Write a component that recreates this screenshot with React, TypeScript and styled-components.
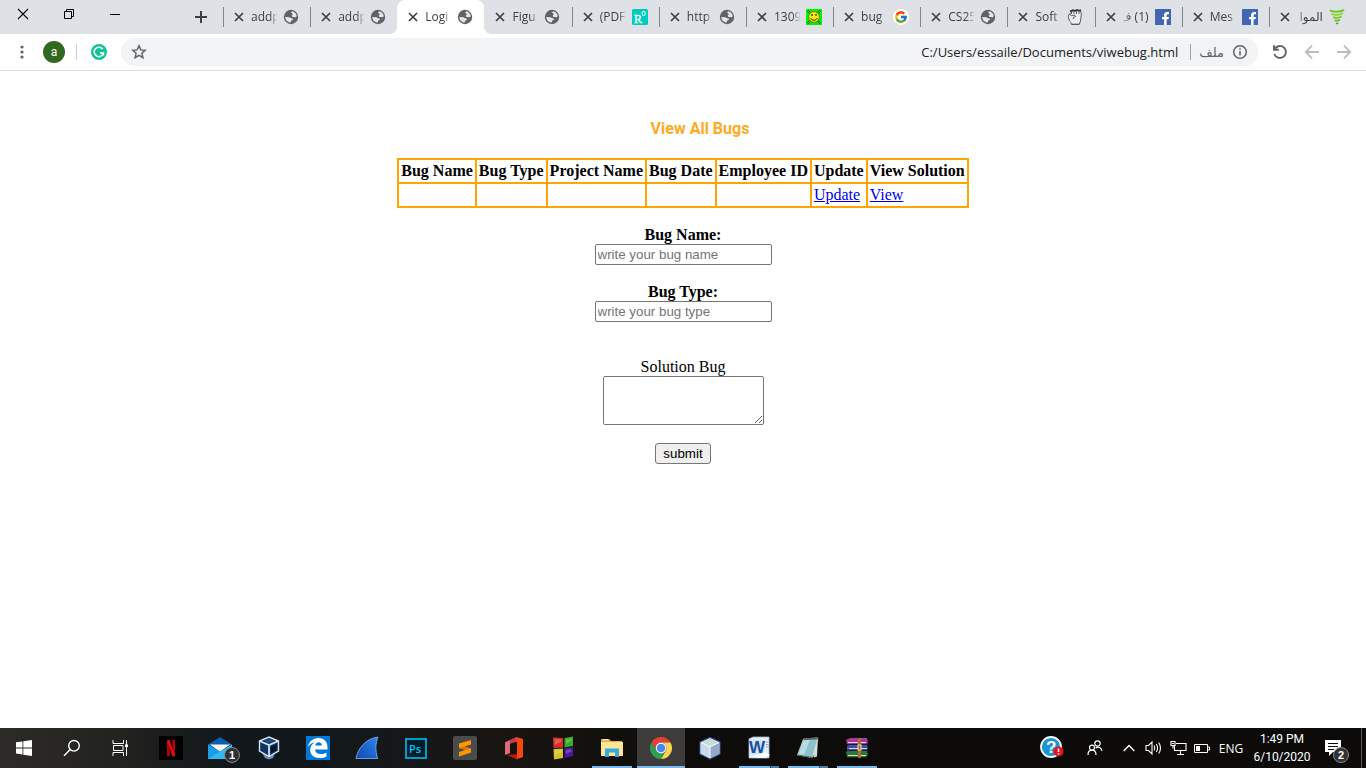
import React from "react";
import styled, { createGlobalStyle, css } from "styled-components";
import { FcGoogle } from "react-icons/fc";
import { FaFacebookF } from "react-icons/fa";

const GlobalStyle = createGlobalStyle`
  * { box-sizing: border-box; }
  body {
    margin: 0;
    background: #fff;
    color: #000;
    font-family: "Liberation Serif", "Times New Roman", serif;
    font-size: 16px;
    line-height: 18px;
  }
  svg { display: block; flex: none; }
`;

const uiFont = `"Open Sans", "Noto Sans", "DejaVu Sans", sans-serif`;

const Screen = styled.div`
  display: flex;
  flex-direction: column;
  min-height: 100vh;
`;

/* ---------- Browser frame ---------- */

const TabStrip = styled.header`
  display: flex;
  height: 34px;
  padding-right: 10px;
  background: #dee1e6;
  font-family: ${uiFont};
`;

const WindowControls = styled.div`
  display: flex;
  height: 28px;
  margin-right: 49px;
`;

const PlainButton = styled.button`
  display: flex;
  align-items: center;
  justify-content: center;
  flex: none;
  padding: 0;
  border: 0;
  background: none;
  color: inherit;
`;

const WindowButton = styled(PlainButton)`
  width: 46px;
  height: 28px;
`;

const NewTabButton = styled(PlainButton)`
  width: 28px;
  height: 34px;
  margin-right: 8px;
`;

const TabList = styled.div`
  display: flex;
  flex: 1;
  min-width: 0;
`;

const Tab = styled.div<{ $active?: boolean; $divider?: boolean }>`
  position: relative;
  display: flex;
  flex: 1 1 0;
  align-items: center;
  min-width: 0;
  padding-left: 11px;
  ${(p) =>
    p.$divider &&
    css`
      background: linear-gradient(#80868b, #80868b) 0 7px / 1px 20px no-repeat;
    `}
  ${(p) =>
    p.$active &&
    css`
      background: #fff;
      border-radius: 8px 8px 0 0;
      &::before,
      &::after {
        content: "";
        position: absolute;
        bottom: 0;
        width: 8px;
        height: 8px;
      }
      &::before {
        left: -8px;
        background: radial-gradient(circle at 0 0, transparent 8px, #fff 8px);
      }
      &::after {
        right: -8px;
        background: radial-gradient(circle at 100% 0, transparent 8px, #fff 8px);
      }
    `}
`;

const TabTitle = styled.span<{ $rtl?: boolean }>`
  flex: none;
  width: 26px;
  margin: 0 6px 0 7px;
  overflow: hidden;
  direction: ${(p) => (p.$rtl ? "rtl" : "ltr")};
  color: #3c4043;
  font-size: 12px;
  line-height: 18px;
  white-space: nowrap;
  mask-image: linear-gradient(
    ${(p) => (p.$rtl ? "to left" : "to right")},
    #000 70%,
    rgba(0, 0, 0, 0.1)
  );
`;

const Toolbar = styled.div`
  display: flex;
  align-items: center;
  height: 37px;
  padding: 0 14px;
  border-bottom: 1px solid #dadce0;
  background: #fff;
  font-family: ${uiFont};
`;

const MenuButton = styled(PlainButton)`
  width: 16px;
  height: 24px;
  margin-right: 13px;
`;

const Avatar = styled(PlainButton)`
  width: 22px;
  height: 22px;
  border-radius: 50%;
  background: #33691e;
  color: #fff;
  font: 12px Roboto, sans-serif;
`;

const Divider = styled.span<{ $tone: string; $gap?: number }>`
  flex: none;
  width: 1px;
  height: 16px;
  margin-left: ${(p) => p.$gap ?? 0}px;
  background: ${(p) => p.$tone};
`;

const ExtensionButton = styled(PlainButton)`
  margin: 0 14px;
`;

const AddressBar = styled.div`
  display: flex;
  flex: 1;
  align-items: center;
  min-width: 0;
  height: 28px;
  margin-right: 14px;
  padding: 0 10px;
  border-radius: 14px;
  background: #f1f3f4;
`;

const AddressInput = styled.input`
  flex: 1;
  min-width: 0;
  padding: 0 12px;
  border: 0;
  outline: 0;
  background: none;
  color: #202124;
  font: 13px ${uiFont};
  text-align: right;
`;

const SchemeLabel = styled.span`
  margin: 0 8px;
  color: #5f6368;
  font-size: 13px;
`;

const NavButtons = styled.div`
  display: flex;
  gap: 16px;
`;

const NavButton = styled(PlainButton)`
  width: 16px;
  height: 16px;
`;

/* ---------- Page content ---------- */

const Page = styled.main`
  display: flex;
  flex: 1;
  flex-direction: column;
  align-items: center;
  padding: 48px 8px 8px;
`;

const Heading = styled.h1`
  margin: 0 0 19px;
  padding-left: 34px;
  color: #ffa922;
  font: bold 16px/20px Roboto, Arial, sans-serif;
`;

const BugTable = styled.table`
  border-collapse: collapse;
  margin-bottom: 18px;
`;

const cell = css`
  height: 24px;
  padding: 2px;
  border: 2px solid orange;
  white-space: nowrap;
`;

const HeadCell = styled.th`
  ${cell}
`;

const Cell = styled.td`
  ${cell}
`;

const CellLink = styled.a`
  color: #0000ee;
`;

const BugForm = styled.form`
  display: flex;
  flex-direction: column;
  align-items: center;
  gap: 18px;
`;

const Field = styled.div`
  display: flex;
  flex-direction: column;
  align-items: center;
`;

const SolutionField = styled(Field)`
  padding-top: 18px;
`;

const FieldLabel = styled.label<{ $bold?: boolean }>`
  font-weight: ${(p) => (p.$bold ? "bold" : "normal")};
`;

const TextBox = styled.input`
  width: 177px;
  height: 21px;
  padding: 1px 2px;
  border: 1px solid #767676;
  border-radius: 2px;
  font-family: "Liberation Sans", Arial, sans-serif;
  &::placeholder { color: #757575; }
`;

const SolutionBox = styled.textarea`
  width: 161px;
  height: 49px;
  border: 1px solid #767676;
  border-radius: 2px;
`;

const SubmitButton = styled.button`
  width: 56px;
  height: 21px;
  padding: 0;
  border: 1px solid #767676;
  border-radius: 3px;
  background: #efefef;
  color: #000;
  font-family: "Liberation Sans", Arial, sans-serif;
`;

/* ---------- Taskbar ---------- */

const Taskbar = styled.footer`
  display: flex;
  height: 40px;
  background: linear-gradient(90deg, #2d2b28 0, #22221f 9%, #11171b 17%, #14181b 27%, #181512 36%, #0e0c0a 50%, #0c0b0a 100%);
  color: #fff;
  font-family: ${uiFont};
  font-size: 12px;
`;

const SystemButtons = styled.div`
  display: flex;
  margin-right: 3px;
`;

const AppButtons = styled.div`
  display: flex;
  flex: 1;
  gap: 1px;
`;

const TaskButton = styled(PlainButton)<{ $state?: "open" | "active" | "multi" }>`
  position: relative;
  width: 48px;
  height: 40px;
  ${(p) =>
    p.$state === "open" &&
    css`
      background: linear-gradient(#76b9ed, #76b9ed) 50% 100% / 40px 2px no-repeat;
    `}
  ${(p) =>
    p.$state === "active" &&
    css`
      background: linear-gradient(#76b9ed, #76b9ed) 0 100% / 48px 2px no-repeat #3d3c3b;
    `}
  ${(p) =>
    p.$state === "multi" &&
    css`
      background: linear-gradient(90deg, #76b9ed 31px, #2b4459 31px, #2b4459 32px, #4e7ba0 32px) 50% 100% / 40px 2px no-repeat;
    `}
`;

const Badge = styled.span<{ $left: number }>`
  position: absolute;
  left: ${(p) => p.$left}px;
  top: 19px;
  width: 16px;
  height: 16px;
  border: 1px solid #8b8b8b;
  border-radius: 50%;
  background: #2f3133;
  font-size: 11px;
  font-weight: 600;
  line-height: 14px;
  text-align: center;
`;

const Tray = styled.div`
  display: flex;
  align-items: center;
`;

const TrayButton = styled(PlainButton)<{ $w: number }>`
  width: ${(p) => p.$w}px;
  height: 40px;
  font: 12px ${uiFont};
`;

const Clock = styled(PlainButton)`
  flex-direction: column;
  width: 68px;
  height: 40px;
  font: 12px/18px "Noto Sans", ${uiFont};
  font-family: Roboto, sans-serif;
`;

const Notifications = styled(PlainButton)`
  position: relative;
  width: 45px;
  height: 40px;
  padding-right: 12px;
`;

const ShowDesktop = styled(PlainButton)`
  width: 5px;
  height: 40px;
  border-left: 1px solid #5a5957;
`;

/* ---------- Icons ---------- */

const CloseIcon = () => (
  <svg width="10" height="10" viewBox="0 0 10 10" fill="none" stroke="#3c4043" strokeWidth="1.7">
    <path d="M1 1l8 8M9 1l-8 8" />
  </svg>
);

const Globe = () => (
  <svg width="16" height="16" viewBox="0 0 16 16">
    <circle cx="8" cy="8" r="7.2" fill="#5f6368" />
    <path
      d="M9 2.300c2.500.4 4.500 2.400 4.700 4.700-.5 1.500-1.700 1.600-2.400 1l-1.900-.1-.7-1.500L10 5.300l-.7-.9-1.200-.3zM2.300 8l4.200.2 1.500 1 1.700.2.300 1.300-1.900 1-.4 1.900C4.800 13.400 2.400 11.300 2.300 8z"
      fill="#e4e6ea"
    />
  </svg>
);

const ResearchGate = () => (
  <svg width="16" height="16" viewBox="0 0 16 16">
    <rect width="16" height="16" rx="1.5" fill="#00ccbb" />
    <text x="2" y="14" fontFamily="Liberation Serif, serif" fontSize="12" fill="#fff" stroke="#fff" strokeWidth=".3">R</text>
    <rect x="10.200" y="2.500" width="3" height="4" rx="1.200" fill="none" stroke="#fff" />
  </svg>
);

const Smiley = () => (
  <svg width="16" height="16" viewBox="0 0 16 16">
    <rect width="16" height="16" fill="#00f600" />
    <path d="M1 2l3 3M2 1l3 3M15 2l-3 3M14 1l-3 3M1 14l3-3M2 15l3-3M15 14l-3-3M14 15l-3-3" stroke="#386018" />
    <circle cx="8" cy="8" r="5.400" fill="#ffed16" stroke="#6b6400" strokeWidth=".8" />
    <path d="M6 5v2M10 5v2" stroke="#332e00" strokeWidth="1.300" />
    <path d="M4.700 9c1 3 5.600 3 6.600 0" fill="none" stroke="#332e00" />
  </svg>
);

const GoogleIcon = () => (
  <svg width="16" height="16" viewBox="0 0 16 16">
    <circle cx="8" cy="8" r="8" fill="#fff" />
    <FcGoogle x="1" y="1" width="14" height="14" size={14} />
  </svg>
);

const Fist = () => (
  <svg width="16" height="16" viewBox="0 0 16 16" fill="none" stroke="#4a4d50" strokeWidth=".9">
    <path d="M4.500 15.300c-.3-1.300-.8-2.300-2-3.300L1.300 7.500l1-2.500 2-.5L5 2l8.500-.3.8 3.500L13.500 12l-1.200 3.300z" fill="#eceef0" />
    <path d="M2.500 5.500l2 1.200 3-.7 1.300 1.500-2.300.7-.5 2" />
    <path d="M4.500 5V2.500M7 5V2M9.500 5V2M12 5V2M4.500 15.300h7.800" />
    <path d="M3 2.500l3-1.500 2 .8L10 .8l2 .8 2-.6" strokeWidth="1.500" stroke="#2c2e30" />
  </svg>
);

const Facebook = () => (
  <svg width="16" height="16" viewBox="0 0 16 16">
    <rect width="16" height="16" rx=".5" fill="#4267b2" />
    <FaFacebookF x="4" y="3" width="12" height="13" size={13} color="#fff" />
  </svg>
);

const Twister = () => (
  <svg width="16" height="16" viewBox="0 0 16 16" fill="none" strokeLinecap="round">
    <path d="M1.700 1.700Q8 4 14.300 1.300" stroke="#76c82c" strokeWidth="2.200" />
    <path d="M3 5.100Q8 7 13.200 4.600" stroke="#8fdb35" strokeWidth="2" />
    <path d="M4.800 8.300Q8 9.500 12 7.800" stroke="#7ccc2c" strokeWidth="1.800" />
    <path d="M6.300 11.400Q8.300 12 10.500 11" stroke="#68b822" strokeWidth="1.600" />
    <path d="M7.600 14.500l1.200-.3" stroke="#57a81b" strokeWidth="1.500" />
  </svg>
);

const Grammarly = () => (
  <svg width="16" height="16" viewBox="0 0 16 16">
    <circle cx="8" cy="8" r="8" fill="#15c39a" />
    <path d="M11.700 5.100A4.700 4.700 0 1 0 12.500 9H9M12.400 8.500v3" fill="none" stroke="#fff" strokeWidth="1.500" />
  </svg>
);

const StartIcon = () => (
  <svg width="16" height="16" viewBox="0 0 16 16" fill="#fff">
    <path d="M0 2.300l6.500-.9v6.100H0zM7.300 1.300L16 0v7.500H7.300zM0 8.400h6.500v6.100L0 13.600zM7.300 8.400H16V16l-8.700-1.300z" />
  </svg>
);

const SearchIcon = () => (
  <svg width="18" height="18" viewBox="0 0 18 18" fill="none" stroke="#fff" strokeWidth="1.400">
    <circle cx="11" cy="6.800" r="5.300" />
    <path d="M7.200 10.600L1 16.800" />
  </svg>
);

const TaskViewIcon = () => (
  <svg width="17" height="16" viewBox="0 0 17 16" fill="none" stroke="#fff">
    <path d="M1 0v3.500h10.500V0M1 16v-3.500h10.500V16M1.500 5.500h9.500v5H1.500zM14.500 0v16" />
    <path d="M13 4.500h3v2.500h-3z" fill="#fff" stroke="none" />
  </svg>
);

const Netflix = () => (
  <svg width="24" height="24" viewBox="0 0 24 24">
    <rect width="24" height="24" fill="#000" />
    <path d="M8 4h2.700v16L8 20.400zM13.300 4H16v16.400l-2.700-.4z" fill="#b1060f" />
    <path d="M8 4h2.700L16 20.400l-2.800-.4z" fill="#e50914" />
  </svg>
);

const Mail = () => (
  <svg width="24" height="24" viewBox="0 0 24 24">
    <path d="M0 8.500L12 1l12 7.500V11H0z" fill="#0f5fb0" />
    <path d="M2 8.500h20L12 16z" fill="#f4f6f8" />
    <path d="M0 8.500L12 15.500V23H0z" fill="#1b9de2" />
    <path d="M24 8.500V23H0l12-7.500z" fill="#35b8f1" />
  </svg>
);

const VirtualBox = () => (
  <svg width="22" height="24" viewBox="0 0 22 24">
    <path d="M4 17l7-2 6 2-2 5-4 1.500L7 22z" fill="#6d8eb5" />
    <path d="M1.500 5L11 1l9.500 4v10L11 20.500 1.500 15z" fill="#10345e" stroke="#d5e2f0" strokeWidth="1.400" />
    <path d="M1.500 5L11 9l9.500-4M11 9v11.500" fill="none" stroke="#d5e2f0" strokeWidth="1.800" />
    <path d="M6 5l5-2 5 2-5 2z" fill="#1c4f86" />
    <path d="M13 11l5.500-2.500v5.500L13 17z" fill="#02142c" />
  </svg>
);

const Edge = () => (
  <svg width="24" height="24" viewBox="0 0 24 24">
    <rect width="24" height="24" fill="#0078d7" />
    <path
      d="M2 11C3 5.500 7 2 12.300 2c6 0 9.200 4.200 9.200 9v2.500H9c.2 3 2.600 4.500 5.800 4.500 2.200 0 4-.5 5.700-1.500v4c-1.900 1-4.200 1.500-6.800 1.500C7.500 22 4.200 18.700 4.200 14c0-3.500 1.800-6.300 5-7.700C6 6.800 3.600 8.400 2 11zm7.200-1.500h6.600c0-2-1-3.300-3.100-3.300-1.900 0-3.200 1.300-3.500 3.300z"
      fill="#fff"
    />
  </svg>
);

const Wireshark = () => (
  <svg width="24" height="24" viewBox="0 0 24 24">
    <defs>
      <linearGradient id="fin" x1="0" y1="1" x2="1" y2="0">
        <stop offset="0" stopColor="#0d49b0" />
        <stop offset="1" stopColor="#2f86ee" />
      </linearGradient>
    </defs>
    <path d="M1 22.500C3 12 11 2.500 23 1c-2.500 6-3 13-.3 21.500z" fill="url(#fin)" stroke="#82b7f2" strokeWidth=".8" />
  </svg>
);

const Photoshop = () => (
  <svg width="22" height="21" viewBox="0 0 22 21">
    <rect x="1" y="1" width="20" height="19" fill="#001d26" stroke="#00c8ff" strokeWidth="1.500" />
    <text x="4" y="15" fontFamily="Open Sans, sans-serif" fontWeight="600" fontSize="11" fill="#00c8ff">Ps</text>
  </svg>
);

const Sublime = () => (
  <svg width="24" height="24" viewBox="0 0 24 24">
    <rect width="24" height="24" rx="2" fill="#4b4b4b" />
    <path d="M6 7.500L18 4v4.500l-6.500 2L18 12.500v4L6 20.500V16l6.500-2L6 12z" fill="#ff9800" />
    <path d="M6 12l6.500 2 5.500-1.500-6.500-2z" fill="#d97400" />
  </svg>
);

const Office = () => (
  <svg width="20" height="24" viewBox="0 0 20 24">
    <path d="M1 6.500L12 1v5L6 8v9l-5 2z" fill="#c33a54" />
    <path d="M1 6.500L6 4v13l-5 2z" fill="#f08d91" opacity=".6" />
    <path d="M12 1l7 2v18l-7 2.500z" fill="#f3490f" />
    <path d="M3 19l10-1v5.500z" fill="#c3180a" />
    <path d="M6 8l7-2v12.500l-7-1z" fill="#17110f" />
  </svg>
);

const ColorPanes = () => (
  <svg width="22" height="24" viewBox="0 0 22 24">
    <path d="M1 1.500l10 .5v9.500l-9.500.5z" fill="#d82f24" />
    <path d="M12.500 2L21 .5V10l-8.500 1.500z" fill="#39ad22" />
    <path d="M1.500 13l9.500-.5v9.500l-9 1.500z" fill="#d3c428" />
    <path d="M12.500 12.500l8.500-1.300V20l-8.500 2z" fill="#4c17a5" />
    <path d="M2.500 3l7 .4v2L2.700 9zM14 3.500l5.500-1v2L14 8zM3 14.500l6.500-.4v2L3 19zM14 14l5.500-.8v2L14 18z" fill="#fff" opacity=".22" />
  </svg>
);

const Explorer = () => (
  <svg width="24" height="22" viewBox="0 0 24 22">
    <path d="M1 3.500V2h8l2 2h11v15H1z" fill="#e8b03c" />
    <path d="M1 5h22v14H1z" fill="#ffe596" />
    <path d="M3 2.800h5" stroke="#fff" />
    <path d="M5 11.500h14V20h-4v-4.500H9V20H5z" fill="#35a9e0" />
  </svg>
);

const Chrome = () => (
  <svg width="24" height="24" viewBox="0 0 24 24">
    {[["#e44134", 0], ["#fdd44b", 120], ["#27a353", 240]].map(([fill, turn]) => (
      <path
        key={turn}
        d="M2.470 6.500A11 11 0 0 1 21.530 6.500L12 6.500A5.500 5.500 0 0 0 7.240 14.750z"
        fill={String(fill)}
        transform={`rotate(${turn} 12 12)`}
      />
    ))}
    <circle cx="12" cy="12" r="5.400" fill="#fff" />
    <circle cx="12" cy="12" r="4.300" fill="#4a86ee" />
  </svg>
);

const NetBeans = () => (
  <svg width="24" height="24" viewBox="0 0 24 24">
    <path d="M2 6l10-4.500L22 6v12l-10 5L2 18z" fill="#dde7f4" stroke="#35478a" strokeWidth="1.200" />
    <path d="M2.600 6.500L12 11v11.300l-9.400-4.700z" fill="#cdd9ea" />
    <path d="M12 11l9.400-4.500v11.100L12 22.300z" fill="#94a8cc" />
    <path d="M3 6.200l9-4 9 4-9 4.300z" fill="#c5dcd6" />
    <path d="M12 11v11M3 6.500l9 4.300 9-4.300" stroke="#f6faff" fill="none" />
  </svg>
);

const Word = () => (
  <svg width="24" height="24" viewBox="0 0 24 24">
    <path d="M2 3l4-2h16v21H2z" fill="#e7f0fa" stroke="#9db8d9" strokeWidth=".8" />
    <path d="M19 6h2.500M19 8.500h2.500M19 11h2.500" stroke="#8aa7ce" />
    <path d="M2 3l16 1v13L2 19z" fill="#d3e4f6" />
    <text x="2" y="17" fontFamily="Liberation Sans, sans-serif" fontWeight="bold" fontSize="17" fill="#174f9f">W</text>
    <path d="M3 21c5 0 7-3 12-3l2-2 6 3-5 3z" fill="#fff" />
  </svg>
);

const Notepad = () => (
  <svg width="24" height="24" viewBox="0 0 24 24">
    <path d="M8 3l14-1.500-1 19-3 1z" fill="#e0d8c9" />
    <path d="M7.500 3L22 2l-5.500 19.500L1.500 19z" fill="#8bc3c8" stroke="#d6eeee" strokeWidth=".7" />
    <path d="M8 4l6-.5L8 19l-5.500-.5z" fill="#b6dde0" />
    <path d="M8 2.300l14-1v2l-14.500 1z" fill="#566166" />
    <path d="M2 19l14.500 2.500 1.500-2" stroke="#4f6466" fill="none" />
  </svg>
);

const WinRar = () => (
  <svg width="24" height="22" viewBox="0 0 24 22">
    <path d="M1 3l4-2h17l1 5-2 1H2z" fill="#a63b96" />
    <path d="M2 9l3-2h17l1 5-2 1H2z" fill="#3350b8" />
    <path d="M1 15l3-2h18l1 5-2 2H2z" fill="#267c32" />
    <path d="M3 5.500h18M4 11.500h18M3 18.500h18" stroke="#ddd5d2" />
    <path d="M2 7.500h20M2 13.500h20M2 20.500h20" stroke="#3a1024" strokeWidth="1.200" />
    <path d="M13 1h3v20h-3z" fill="#a76e37" />
    <path d="M13 8h3v5h-3z" fill="none" stroke="#ead594" strokeWidth="1.200" />
  </svg>
);

const Help = () => (
  <svg width="24" height="24" viewBox="0 0 24 24">
    <circle cx="11" cy="11" r="10" fill="#1b94d2" stroke="#f4f9fc" strokeWidth="1.800" />
    <text x="6" y="17" fontFamily="Liberation Sans, sans-serif" fontWeight="bold" fontSize="17" fill="#fff">?</text>
    <circle cx="18.500" cy="15.500" r="5" fill="#e8131c" />
    <path d="M18.500 12.500v3.500M18.500 17v1.500" stroke="#fff" strokeWidth="1.500" />
  </svg>
);

const People = () => (
  <svg width="16" height="16" viewBox="0 0 16 16" fill="none" stroke="#fff" strokeWidth="1.200">
    <circle cx="10.500" cy="3.500" r="2.700" />
    <circle cx="5" cy="7.700" r="2.500" />
    <path d="M1 15c0-6.500 8-6.500 8 0M8.500 8c3-2 6-.5 6.500 3" />
  </svg>
);

const Volume = () => (
  <svg width="18" height="16" viewBox="0 0 18 16" fill="none" stroke="#fff" strokeWidth="1.100">
    <path d="M1 5.500h2.500L7 2v12l-3.500-3.500H1zM9 5.500q1.600 2.500 0 5M11.300 4q2.600 4 0 8M13.700 2.500q3.600 5.500 0 11" />
  </svg>
);

const Network = () => (
  <svg width="17" height="16" viewBox="0 0 17 16" fill="none" stroke="#fff" strokeWidth="1.100">
    <path d="M6 3.500h10v7H4.500V6M10.500 10.500V14M7 14.500h7M1 1.500h4v4H1zM3 5.500v3" />
    <path d="M2 3.500h2" />
  </svg>
);

const Battery = () => (
  <svg width="16" height="9" viewBox="0 0 16 9">
    <path d="M.5.500h13v8H.5zM14 3h1.500v3H14" fill="none" stroke="#fff" />
    <path d="M2 2h4v5H2z" fill="#fff" />
  </svg>
);

/* ---------- Data ---------- */

type TabInfo = {
  title: string;
  Icon: () => React.ReactElement;
  active?: boolean;
  divider?: boolean;
  rtl?: boolean;
};

const tabs: TabInfo[] = [
  { title: "addp", Icon: Globe, divider: true },
  { title: "addp", Icon: Globe, divider: true },
  { title: "Logi", Icon: Globe, active: true },
  { title: "Figu", Icon: Globe },
  { title: "(PDF", Icon: ResearchGate, divider: true },
  { title: "http", Icon: Globe, divider: true },
  { title: "1309", Icon: Smiley, divider: true },
  { title: "bug", Icon: GoogleIcon, divider: true },
  { title: "CS25", Icon: Globe, divider: true },
  { title: "Soft", Icon: Fist, divider: true },
  { title: "(1) ف", Icon: Facebook, divider: true, rtl: true },
  { title: "Mes", Icon: Facebook, divider: true },
  { title: "الموا", Icon: Twister, divider: true, rtl: true },
];

const columns = ["Bug Name", "Bug Type", "Project Name", "Bug Date", "Employee ID", "Update", "View Solution"];

type AppInfo = {
  name: string;
  Icon: () => React.ReactElement;
  state?: "open" | "active" | "multi";
  badge?: string;
};

const apps: AppInfo[] = [
  { name: "Netflix", Icon: Netflix },
  { name: "Mail", Icon: Mail, badge: "1" },
  { name: "VirtualBox", Icon: VirtualBox },
  { name: "Edge", Icon: Edge },
  { name: "Wireshark", Icon: Wireshark },
  { name: "Photoshop", Icon: Photoshop },
  { name: "Sublime Text", Icon: Sublime },
  { name: "Office", Icon: Office },
  { name: "Panes", Icon: ColorPanes },
  { name: "File Explorer", Icon: Explorer, state: "open" },
  { name: "Chrome", Icon: Chrome, state: "active" },
  { name: "NetBeans", Icon: NetBeans },
  { name: "Word", Icon: Word, state: "multi" },
  { name: "Notepad", Icon: Notepad, state: "multi" },
  { name: "WinRAR", Icon: WinRar, state: "open" },
];

/* ---------- Sections ---------- */

const BrowserTabs = () => (
  <TabStrip>
    <WindowControls>
      <WindowButton aria-label="Close window">
        <svg width="12" height="12" viewBox="0 0 12 12" stroke="#000" strokeWidth="1.100">
          <path d="M1 1l10 10M11 1L1 11" />
        </svg>
      </WindowButton>
      <WindowButton aria-label="Restore window">
        <svg width="10" height="10" viewBox="0 0 10 10" fill="none" stroke="#000">
          <path d="M.5 2.500h7v7h-7zM2.500 2.500v-2h7v7h-2" />
        </svg>
      </WindowButton>
      <WindowButton aria-label="Minimize window">
        <svg width="10" height="10" viewBox="0 0 10 10" stroke="#000">
          <path d="M0 5.500h10" />
        </svg>
      </WindowButton>
    </WindowControls>
    <NewTabButton aria-label="New tab">
      <svg width="12" height="12" viewBox="0 0 12 12" stroke="#3c4043" strokeWidth="2">
        <path d="M6 0v12M0 6h12" />
      </svg>
    </NewTabButton>
    <TabList role="tablist">
      {tabs.map(({ title, Icon, active, divider, rtl }, i) => (
        <Tab key={i} role="tab" aria-selected={!!active} $active={active} $divider={divider}>
          <PlainButton aria-label="Close tab">
            <CloseIcon />
          </PlainButton>
          <TabTitle $rtl={rtl}>{title}</TabTitle>
          <Icon />
        </Tab>
      ))}
    </TabList>
  </TabStrip>
);

const BrowserToolbar = () => (
  <Toolbar>
    <MenuButton aria-label="Menu">
      <svg width="4" height="14" viewBox="0 0 4 14" fill="#5f6368">
        <circle cx="2" cy="2" r="1.600" />
        <circle cx="2" cy="7" r="1.600" />
        <circle cx="2" cy="12" r="1.600" />
      </svg>
    </MenuButton>
    <Avatar aria-label="Profile">a</Avatar>
    <Divider $tone="#c9cbcf" $gap={11} />
    <ExtensionButton aria-label="Grammarly">
      <Grammarly />
    </ExtensionButton>
    <AddressBar>
      <PlainButton aria-label="Bookmark this page">
        <svg width="16" height="16" viewBox="0 0 16 16" fill="none" stroke="#5f6368" strokeWidth="1.500">
          <path d="M8 1.800l1.800 4.100 4.400.4-3.300 3 1 4.400L8 11.400l-3.900 2.300 1-4.400-3.300-3 4.400-.4z" />
        </svg>
      </PlainButton>
      <AddressInput aria-label="Address" defaultValue="C:/Users/essaile/Documents/viwebug.html" />
      <Divider $tone="#9aa0a6" />
      <SchemeLabel>ملف</SchemeLabel>
      <PlainButton aria-label="Page information">
        <svg width="16" height="16" viewBox="0 0 16 16" fill="none" stroke="#5f6368" strokeWidth="1.500">
          <circle cx="8" cy="8" r="6.300" />
          <path d="M8 7v4.500M8 4.300v1.500" />
        </svg>
      </PlainButton>
    </AddressBar>
    <NavButtons>
      <NavButton aria-label="Reload">
        <svg width="16" height="16" viewBox="0 0 16 16" fill="none" stroke="#5f6368" strokeWidth="1.900">
          <path d="M3 4.500A6 6 0 1 1 2.300 10M2 1.200v4.600h4.800" />
        </svg>
      </NavButton>
      <NavButton aria-label="Forward">
        <svg width="16" height="16" viewBox="0 0 16 16" fill="none" stroke="#babcbe" strokeWidth="1.800">
          <path d="M15 8H2.500M8 1.700L1.800 8 8 14.300" />
        </svg>
      </NavButton>
      <NavButton aria-label="Back">
        <svg width="16" height="16" viewBox="0 0 16 16" fill="none" stroke="#babcbe" strokeWidth="1.800">
          <path d="M1 8h12.500M8 1.700L14.200 8 8 14.300" />
        </svg>
      </NavButton>
    </NavButtons>
  </Toolbar>
);

const BugsPage = () => (
  <Page>
    <Heading>View All Bugs</Heading>
    <BugTable>
      <thead>
        <tr>
          {columns.map((name) => (
            <HeadCell key={name}>{name}</HeadCell>
          ))}
        </tr>
      </thead>
      <tbody>
        <tr>
          <Cell />
          <Cell />
          <Cell />
          <Cell />
          <Cell />
          <Cell>
            <CellLink href="#update">Update</CellLink>
          </Cell>
          <Cell>
            <CellLink href="#view">View</CellLink>
          </Cell>
        </tr>
      </tbody>
    </BugTable>
    <BugForm onSubmit={(e: React.FormEvent) => e.preventDefault()}>
      <Field>
        <FieldLabel $bold htmlFor="bug-name">Bug Name:</FieldLabel>
        <TextBox id="bug-name" placeholder="write your bug name" />
      </Field>
      <Field>
        <FieldLabel $bold htmlFor="bug-type">Bug Type:</FieldLabel>
        <TextBox id="bug-type" placeholder="write your bug type" />
      </Field>
      <SolutionField>
        <FieldLabel htmlFor="solution">Solution Bug</FieldLabel>
        <SolutionBox id="solution" />
      </SolutionField>
      <SubmitButton type="submit">submit</SubmitButton>
    </BugForm>
  </Page>
);

const WindowsTaskbar = () => (
  <Taskbar>
    <SystemButtons>
      <TaskButton aria-label="Start"><StartIcon /></TaskButton>
      <TaskButton aria-label="Search"><SearchIcon /></TaskButton>
      <TaskButton aria-label="Task view"><TaskViewIcon /></TaskButton>
    </SystemButtons>
    <AppButtons>
      {apps.map(({ name, Icon, state, badge }) => (
        <TaskButton key={name} aria-label={name} $state={state}>
          <Icon />
          {badge && <Badge $left={28}>{badge}</Badge>}
        </TaskButton>
      ))}
    </AppButtons>
    <Tray>
      <TrayButton $w={44} aria-label="Help"><Help /></TrayButton>
      <TrayButton $w={42} aria-label="People"><People /></TrayButton>
      <TrayButton $w={26} aria-label="Show hidden icons">
        <svg width="12" height="8" viewBox="0 0 12 8" fill="none" stroke="#fff" strokeWidth="1.300">
          <path d="M.7 7L6 1.500 11.300 7" />
        </svg>
      </TrayButton>
      <TrayButton $w={24} aria-label="Volume"><Volume /></TrayButton>
      <TrayButton $w={24} aria-label="Network"><Network /></TrayButton>
      <TrayButton $w={24} aria-label="Battery"><Battery /></TrayButton>
      <TrayButton $w={34}>ENG</TrayButton>
      <Clock>
        <span>1:49 PM</span>
        <span>6/10/2020</span>
      </Clock>
      <Notifications aria-label="Notifications">
        <svg width="16" height="16" viewBox="0 0 16 16">
          <path d="M0 0h16v12H8l-4 4v-4H0z" fill="#fff" />
          <path d="M3 3.500h10M3 6.500h10M3 9.500h6" stroke="#0c0b0a" />
        </svg>
        <Badge $left={17}>2</Badge>
      </Notifications>
      <ShowDesktop aria-label="Show desktop" />
    </Tray>
  </Taskbar>
);

const App = () => (
  <Screen>
    <GlobalStyle />
    <BrowserTabs />
    <BrowserToolbar />
    <BugsPage />
    <WindowsTaskbar />
  </Screen>
);

export default App;
